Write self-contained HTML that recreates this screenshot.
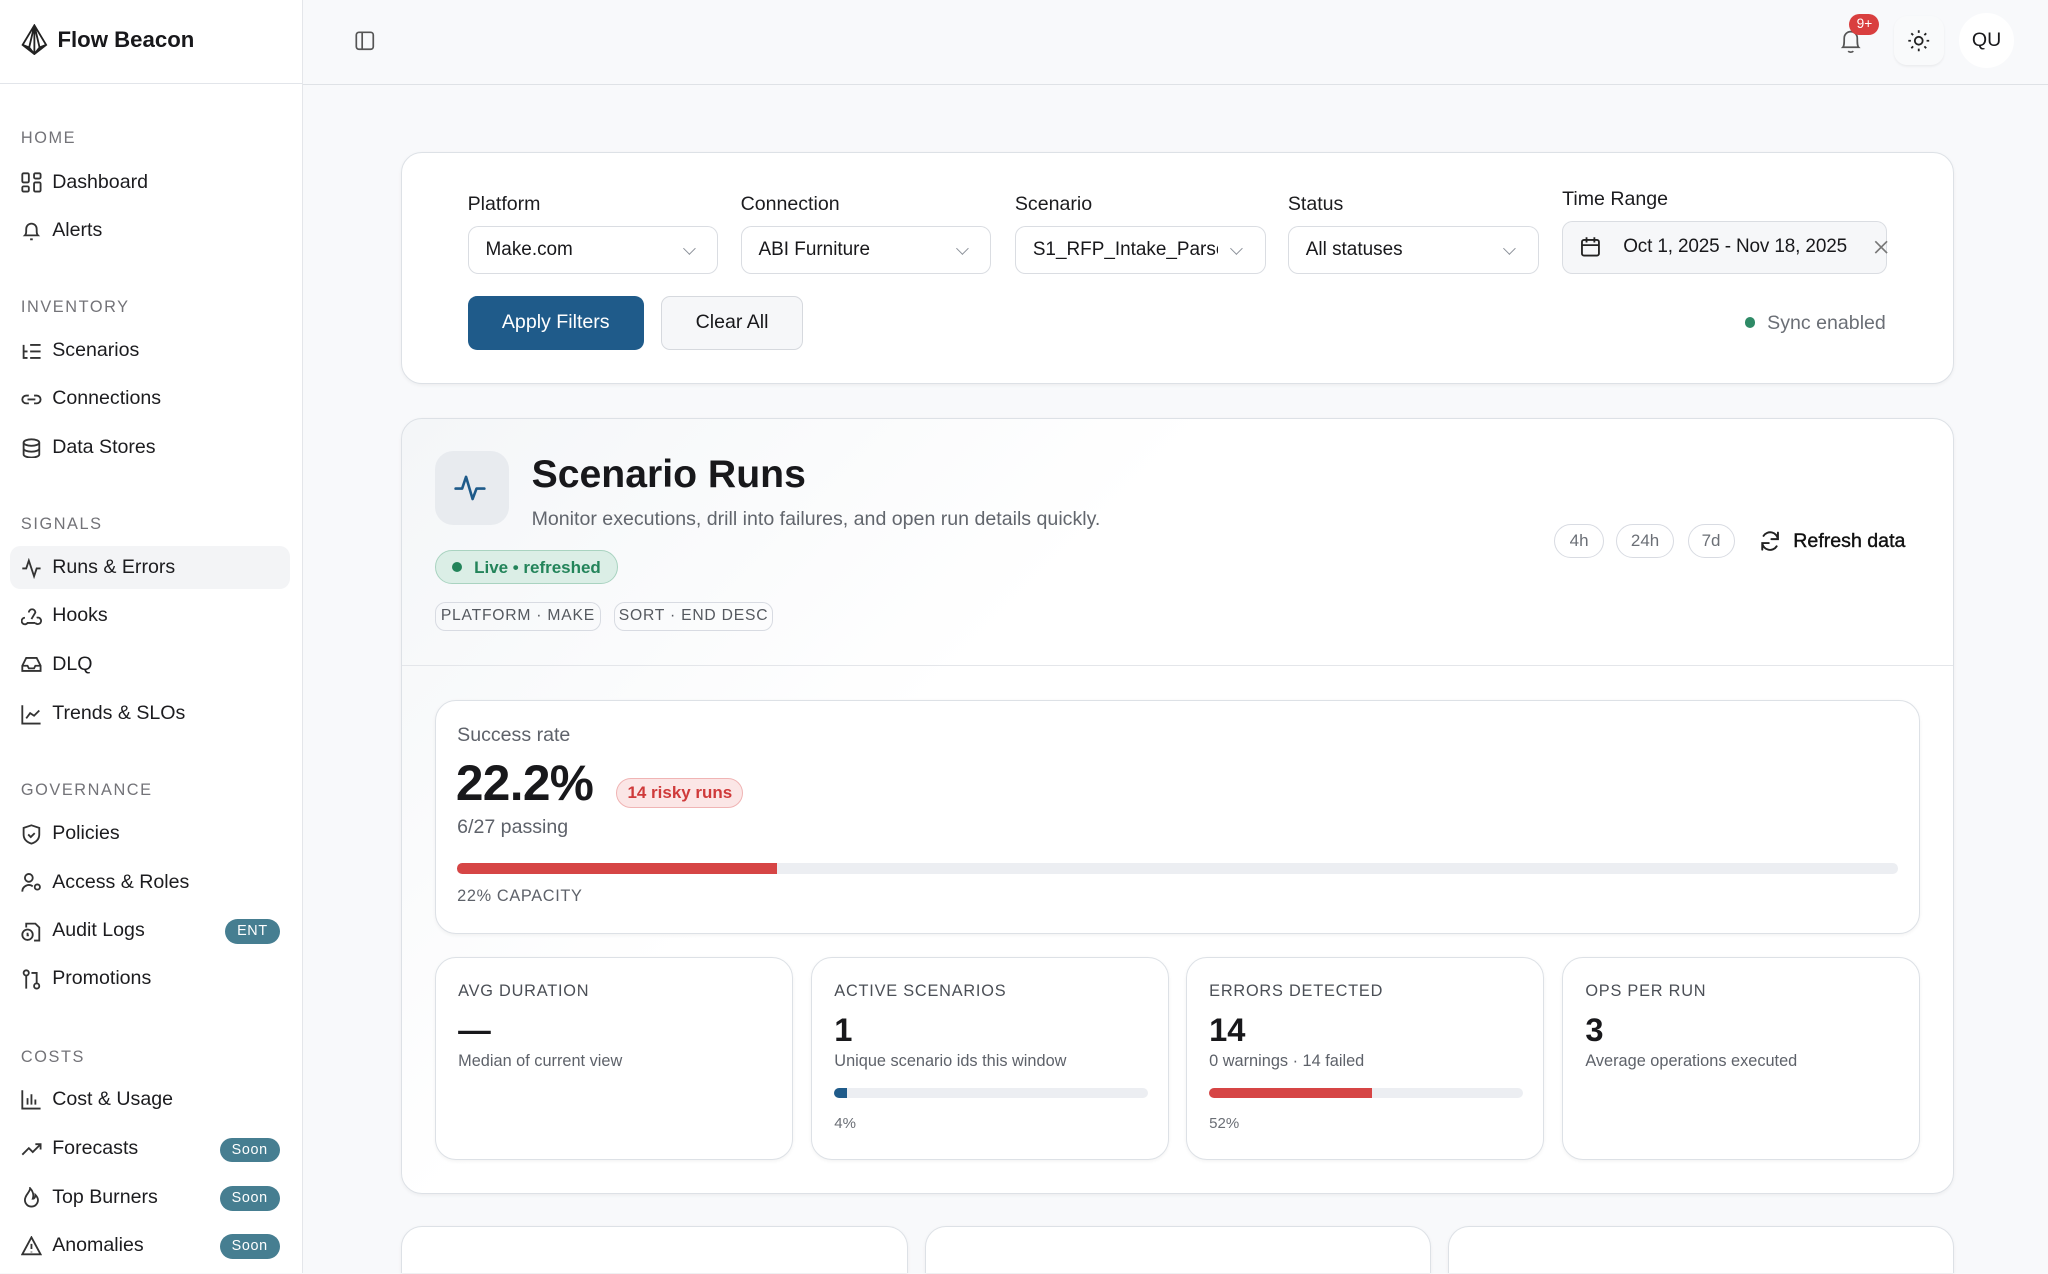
<!DOCTYPE html>
<html><head><meta charset="utf-8"><style>
html{zoom:1.306122;overflow:hidden;height:975px}
*{box-sizing:border-box;margin:0;padding:0}
body{width:1568px;height:975px;overflow:hidden;background:#f8f9fb;font-family:"Liberation Sans",sans-serif;color:#18181b;position:relative}
.abs{position:absolute}
.side{left:0;top:0;width:232px;height:975px;background:#fff;border-right:1px solid #e4e6ea}
.brand{left:0;top:0;width:231px;height:64px;border-bottom:1px solid #e2e5ea}
.sec{position:absolute;left:16px;font-size:12.5px;letter-spacing:1.2px;color:#737378}
.it{position:absolute;left:8px;width:214px;height:33px;border-radius:8px;font-size:15px;line-height:33px;padding-left:32px;color:#1c1c1f}
.it svg{position:absolute;left:8px;top:9px}
.it.act{background:#f3f4f6}
.badge{position:absolute;right:8px;top:8px;height:19px;border-radius:10px;background:#467e91;color:#fff;font-size:11px;line-height:19px;padding:0 9px;letter-spacing:.5px}
.top{left:232px;top:0;right:0;height:65px;border-bottom:1px solid #dfe2e6}
.card{background:#fff;border:1px solid #dde1e6;border-radius:16px;box-shadow:0 1px 3px rgba(0,0,0,.05)}
.lbl{position:absolute;font-size:15px;color:#1c1c1f}
.sel{position:absolute;height:37px;border:1px solid #dadde2;border-radius:8px;background:#fff;font-size:14.5px;line-height:35px;padding-left:13px;overflow:hidden;white-space:nowrap}
.sel:after{content:"";position:absolute;right:18px;top:13px;width:6px;height:6px;border-right:1.3px solid #8a8f98;border-bottom:1.3px solid #8a8f98;transform:rotate(45deg);background:transparent}
.pill{position:absolute;border:1px solid #d8dbe2;border-radius:14px;font-size:13px;color:#6b6f76;text-align:center}
.stat{position:absolute;top:733px;width:274px;height:155px}
.stat .h{position:absolute;left:17px;top:18px;font-size:12.5px;letter-spacing:.6px;color:#4b4f56}
.stat .v{position:absolute;left:17px;top:40px;font-size:25px;font-weight:bold}
.stat .s{position:absolute;left:17px;top:72px;font-size:12.5px;color:#5e626a}
.bar{position:absolute;left:17px;top:99px;width:240px;height:8px;border-radius:4px;background:#eceef2;overflow:hidden}
.stat .p{position:absolute;left:17px;top:120px;font-size:11.5px;color:#6b6f76}
</style></head><body>
<div class="abs side"></div>
<div class="abs brand">
<svg class="abs" style="left:15px;top:18px" width="22" height="24" viewBox="0 0 22 24" fill="none" stroke="#222" stroke-width="1.4"><path d="M11 1L2 16l9 7 9-7z M11 1L7 18l4 5 4-5z M11 1v22 M2 16l5 2 M20 16l-5 2"/></svg>
<div class="abs" style="left:44px;top:21px;font-size:17px;font-weight:bold">Flow Beacon</div>
</div>
<div class="sec" style="top:99px">HOME</div>
<div class="it" style="top:123px"><svg width="16" height="16" viewBox="0 0 16 16" fill="none" stroke="#333" stroke-width="1.4"><rect x="1" y="1" width="5" height="7" rx="1"/><rect x="10" y="1" width="5" height="4" rx="1"/><rect x="1" y="11" width="5" height="4" rx="1"/><rect x="10" y="8" width="5" height="7" rx="1"/></svg>Dashboard</div>
<div class="it" style="top:160px"><svg width="16" height="16" viewBox="0 0 16 16" fill="none" stroke="#333" stroke-width="1.4"><path d="M3 11c1-1 1-2 1-5a4 4 0 018 0c0 3 0 4 1 5z M7 14h2"/></svg>Alerts</div>
<div class="sec" style="top:228px">INVENTORY</div>
<div class="it" style="top:252px"><svg width="16" height="16" viewBox="0 0 16 16" fill="none" stroke="#333" stroke-width="1.4"><path d="M2 3v10h3 M2 8h3 M7 3h8 M7 8h8 M7 13h8"/></svg>Scenarios</div>
<div class="it" style="top:289px"><svg width="16" height="16" viewBox="0 0 16 16" fill="none" stroke="#333" stroke-width="1.4"><path d="M6 5H4a3 3 0 000 6h2 M10 5h2a3 3 0 010 6h-2 M5 8h6"/></svg>Connections</div>
<div class="it" style="top:326px"><svg width="16" height="16" viewBox="0 0 16 16" fill="none" stroke="#333" stroke-width="1.4"><ellipse cx="8" cy="3.5" rx="6" ry="2.5"/><path d="M2 3.5v9c0 1.4 2.7 2.5 6 2.5s6-1.1 6-2.5v-9 M2 8c0 1.4 2.7 2.5 6 2.5s6-1.1 6-2.5"/></svg>Data Stores</div>
<div class="sec" style="top:394px">SIGNALS</div>
<div class="it act" style="top:418px"><svg width="16" height="16" viewBox="0 0 16 16" fill="none" stroke="#333" stroke-width="1.4"><path d="M1 8h3l2-6 4 12 2-6h3"/></svg>Runs &amp; Errors</div>
<div class="it" style="top:455px"><svg width="16" height="16" viewBox="0 0 16 16" fill="none" stroke="#333" stroke-width="1.4"><path d="M6 5a2.5 2.5 0 115 0l-3 5 M3 9a2.5 2.5 0 102 4h6 M12 9a2.5 2.5 0 11-1 4"/></svg>Hooks</div>
<div class="it" style="top:492px"><svg width="16" height="16" viewBox="0 0 16 16" fill="none" stroke="#333" stroke-width="1.4"><path d="M1 9l3-6h8l3 6v4H1z M1 9h4l1 2h4l1-2h4"/></svg>DLQ</div>
<div class="it" style="top:530px"><svg width="16" height="16" viewBox="0 0 16 16" fill="none" stroke="#333" stroke-width="1.4"><path d="M1 1v14h14 M4 11l3-4 3 2 4-4"/></svg>Trends &amp; SLOs</div>
<div class="sec" style="top:598px">GOVERNANCE</div>
<div class="it" style="top:622px"><svg width="16" height="16" viewBox="0 0 16 16" fill="none" stroke="#333" stroke-width="1.4"><path d="M8 1l6 2v5c0 4-3 6-6 7-3-1-6-3-6-7V3z M5.5 8l2 2 3-3"/></svg>Policies</div>
<div class="it" style="top:659px"><svg width="16" height="16" viewBox="0 0 16 16" fill="none" stroke="#333" stroke-width="1.4"><circle cx="6" cy="4.5" r="3"/><path d="M1 15a5 5 0 018-4"/><circle cx="12.5" cy="11.5" r="2"/></svg>Access &amp; Roles</div>
<div class="it" style="top:696px"><svg width="16" height="16" viewBox="0 0 16 16" fill="none" stroke="#333" stroke-width="1.4"><path d="M4 5V2h7l3 3v10h-4"/><circle cx="5" cy="10.5" r="4"/><path d="M5 9v2h1"/></svg>Audit Logs<span class="badge">ENT</span></div>
<div class="it" style="top:733px"><svg width="16" height="16" viewBox="0 0 16 16" fill="none" stroke="#333" stroke-width="1.4"><circle cx="4" cy="3" r="2"/><path d="M4 5v10 M8 3h4v8"/><circle cx="12" cy="13" r="2"/></svg>Promotions</div>
<div class="sec" style="top:802px">COSTS</div>
<div class="it" style="top:825px"><svg width="16" height="16" viewBox="0 0 16 16" fill="none" stroke="#333" stroke-width="1.4"><path d="M1 1v14h14 M5 12V7 M8 12V4 M11 12V8"/></svg>Cost &amp; Usage</div>
<div class="it" style="top:863px"><svg width="16" height="16" viewBox="0 0 16 16" fill="none" stroke="#333" stroke-width="1.4"><path d="M1 12l5-5 3 3 6-6 M11 4h4v4"/></svg>Forecasts<span class="badge">Soon</span></div>
<div class="it" style="top:900px"><svg width="16" height="16" viewBox="0 0 16 16" fill="none" stroke="#333" stroke-width="1.4"><path d="M7 1c0 3-4 5-4 9a5 5 0 0010 0c0-2-1-3-2-4 0 2-1 3-2 3 1-3 0-6-2-8z"/></svg>Top Burners<span class="badge">Soon</span></div>
<div class="it" style="top:937px"><svg width="16" height="16" viewBox="0 0 16 16" fill="none" stroke="#333" stroke-width="1.4"><path d="M8 1L1 14h14z M8 6v4 M8 12v.5"/></svg>Anomalies<span class="badge">Soon</span></div>

<div class="abs top"></div>
<svg class="abs" style="left:272px;top:24px" width="15" height="15" viewBox="0 0 15 15" fill="none" stroke="#555" stroke-width="1.3"><rect x="1" y="1" width="13" height="13" rx="2"/><path d="M5.5 1v13"/></svg>
<svg class="abs" style="left:1408px;top:22px" width="18" height="20" viewBox="0 0 18 20" fill="none" stroke="#555" stroke-width="1.3"><path d="M3 14c1-1 1-3 1-7a5 5 0 0110 0c0 4 0 6 1 7z M7 17c1 1 3 1 4 0"/></svg>
<div class="abs" style="left:1416px;top:11px;width:23px;height:16px;border-radius:8px;background:#d93f3f;color:#fff;font-size:10.5px;line-height:16px;text-align:center">9+</div>
<div class="abs" style="left:1450px;top:12px;width:38px;height:38px;border-radius:10px;background:#f9fafb;box-shadow:0 1px 2px rgba(0,0,0,.06)"></div>
<svg class="abs" style="left:1460px;top:22px" width="18" height="18" viewBox="0 0 18 18" fill="none" stroke="#222" stroke-width="1.4"><circle cx="9" cy="9" r="3"/><path d="M9 1v2 M9 15v2 M1 9h2 M15 9h2 M3.3 3.3l1.4 1.4 M13.3 13.3l1.4 1.4 M3.3 14.7l1.4-1.4 M13.3 4.7l1.4-1.4"/></svg>
<div class="abs" style="left:1500px;top:10px;width:42px;height:42px;border-radius:21px;background:#fff;font-size:15px;line-height:42px;text-align:center">QU</div>

<div class="abs card" style="left:307px;top:116px;width:1189px;height:178px"></div>
<div class="lbl" style="left:358px;top:148px">Platform</div>
<div class="lbl" style="left:567px;top:148px">Connection</div>
<div class="lbl" style="left:777px;top:148px">Scenario</div>
<div class="lbl" style="left:986px;top:148px">Status</div>
<div class="lbl" style="left:1196px;top:144px">Time Range</div>
<div class="sel" style="left:358px;top:173px;width:192px">Make.com</div>
<div class="sel" style="left:567px;top:173px;width:192px">ABI Furniture</div>
<div class="sel" style="left:777px;top:173px;width:192px"><span style="display:inline-block;width:142px;overflow:hidden;vertical-align:top">S1_RFP_Intake_Parser</span></div>
<div class="sel" style="left:986px;top:173px;width:192px">All statuses</div>
<div class="abs" style="left:1196px;top:169px;width:249px;height:41px;border:1px solid #dadde2;border-radius:8px;background:#f6f7f9;font-size:14.5px;line-height:39px;padding-left:46px;white-space:nowrap;letter-spacing:-.1px">Oct 1, 2025 - Nov 18, 2025</div>
<svg class="abs" style="left:1210px;top:181px" width="16" height="16" viewBox="0 0 16 16" fill="none" stroke="#222" stroke-width="1.4"><rect x="1.5" y="3" width="13" height="12" rx="1.5"/><path d="M1.5 7h13 M5 1v4 M11 1v4"/></svg>
<svg class="abs" style="left:1435px;top:184px" width="11" height="11" viewBox="0 0 11 11" stroke="#777" stroke-width="1.3"><path d="M1 1l9 9M10 1l-9 9"/></svg>
<div class="abs" style="left:358px;top:227px;width:135px;height:41px;border-radius:7px;background:#1f5b8a;color:#fff;font-size:15px;line-height:41px;text-align:center">Apply Filters</div>
<div class="abs" style="left:506px;top:227px;width:109px;height:41px;border-radius:7px;background:#f6f7f9;border:1px solid #d6d9de;font-size:15px;line-height:39px;text-align:center">Clear All</div>
<div class="abs" style="left:1336px;top:243px;width:8px;height:8px;border-radius:4px;background:#2e8a66"></div>
<div class="abs" style="left:1353px;top:239px;font-size:15px;color:#6b6f76">Sync enabled</div>

<div class="abs card" style="left:307px;top:320px;width:1189px;height:594px;background:linear-gradient(135deg,#f4f6f8 0%,#fff 35%)"></div>
<div class="abs" style="left:308px;top:509px;width:1187px;height:1px;background:#e4e6ea"></div>
<div class="abs" style="left:333px;top:345px;width:57px;height:57px;border-radius:14px;background:#e8ebef"></div>
<svg class="abs" style="left:347px;top:359px" width="29" height="29" viewBox="0 0 29 29" fill="none" stroke="#1f5b8a" stroke-width="2" stroke-linecap="round" stroke-linejoin="round"><path d="M2 15h5l3-9 5 17 3-8h6"/></svg>
<div class="abs" style="left:407px;top:347px;font-size:30px;font-weight:bold;color:#18181b">Scenario Runs</div>
<div class="abs" style="left:407px;top:389px;font-size:15px;color:#62666d">Monitor executions, drill into failures, and open run details quickly.</div>
<div class="abs" style="left:333px;top:421px;width:140px;height:26px;border-radius:13px;background:#dbeee6;border:1px solid #a9d3c0"></div>
<div class="abs" style="left:346px;top:430px;width:8px;height:8px;border-radius:4px;background:#23845a"></div>
<div class="abs" style="left:363px;top:427px;font-size:13px;font-weight:bold;color:#23845a">Live • refreshed</div>
<div class="pill" style="left:333px;top:461px;width:127px;height:22px;line-height:20px;font-size:12px;letter-spacing:.6px;color:#55595f;border-radius:8px">PLATFORM · MAKE</div>
<div class="pill" style="left:470px;top:461px;width:122px;height:22px;line-height:20px;font-size:12px;letter-spacing:.6px;color:#55595f;border-radius:8px">SORT · END DESC</div>
<div class="pill" style="left:1190px;top:401px;width:38px;height:26px;line-height:24px">4h</div>
<div class="pill" style="left:1237px;top:401px;width:45px;height:26px;line-height:24px">24h</div>
<div class="pill" style="left:1292px;top:401px;width:36px;height:26px;line-height:24px">7d</div>
<svg class="abs" style="left:1347px;top:406px" width="17" height="17" viewBox="0 0 17 17" fill="none" stroke="#222" stroke-width="1.5" stroke-linecap="round"><path d="M14.5 7A6 6 0 003.5 4.5 M2.5 10a6 6 0 0011 2.5 M14.5 2v5h-5 M2.5 15v-5h5"/></svg>
<div class="abs" style="left:1373px;top:406px;font-size:15px;color:#111;-webkit-text-stroke:.3px #111">Refresh data</div>

<div class="abs card" style="left:333px;top:536px;width:1137px;height:179px"></div>
<div class="abs" style="left:350px;top:554px;font-size:15px;color:#5e626a">Success rate</div>
<div class="abs" style="left:349px;top:577px;font-size:38px;font-weight:bold;letter-spacing:-.5px">22.2%</div>
<div class="abs" style="left:472px;top:596px;width:97px;height:23px;border-radius:12px;background:#fbe6e6;border:1px solid #f0b4b4;color:#cf3a3a;font-size:13px;font-weight:bold;line-height:21px;text-align:center">14 risky runs</div>
<div class="abs" style="left:350px;top:625px;font-size:15px;color:#5e626a">6/27 passing</div>
<div class="abs" style="left:350px;top:661px;width:1103px;height:8px;border-radius:4px;background:#eceef2;overflow:hidden"><div style="width:245px;height:8px;background:#d64545"></div></div>
<div class="abs" style="left:350px;top:679px;font-size:12.5px;letter-spacing:.5px;color:#5e626a">22% CAPACITY</div>

<div class="stat card" style="left:333px"><div class="h">AVG DURATION</div><div class="v">—</div><div class="s">Median of current view</div></div>
<div class="stat card" style="left:621px"><div class="h">ACTIVE SCENARIOS</div><div class="v">1</div><div class="s">Unique scenario ids this window</div><div class="bar"><div style="width:10px;height:8px;background:#1f5b8a"></div></div><div class="p">4%</div></div>
<div class="stat card" style="left:908px"><div class="h">ERRORS DETECTED</div><div class="v">14</div><div class="s">0 warnings · 14 failed</div><div class="bar"><div style="width:125px;height:8px;background:#d64545"></div></div><div class="p">52%</div></div>
<div class="stat card" style="left:1196px"><div class="h">OPS PER RUN</div><div class="v">3</div><div class="s">Average operations executed</div></div>

<div class="abs card" style="left:307px;top:939px;width:388px;height:36px;border-bottom:none;border-radius:16px 16px 0 0"></div>
<div class="abs card" style="left:708px;top:939px;width:388px;height:36px;border-bottom:none;border-radius:16px 16px 0 0"></div>
<div class="abs card" style="left:1109px;top:939px;width:387px;height:36px;border-bottom:none;border-radius:16px 16px 0 0"></div>
</body></html>
